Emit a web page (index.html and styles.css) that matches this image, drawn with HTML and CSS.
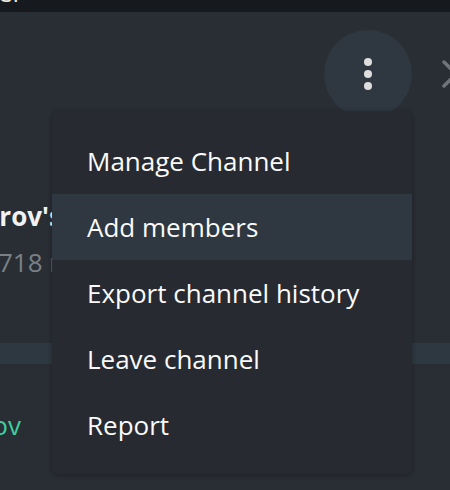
FILE: index.html
```html
<!DOCTYPE html>
<html>
<head>
<meta charset="utf-8">
<link rel="stylesheet" href="styles.css">
</head>
<body>
<div class="topbar"><span class="topbar-text">er</span></div>
<div class="panel">
  <div class="header">
    <button class="more-btn" aria-label="More">
      <span class="dot"></span><span class="dot"></span><span class="dot"></span>
    </button>
    <svg class="close" width="28" height="28" viewBox="0 0 28 28">
      <path d="M2 2 L26 26 M26 2 L2 26" stroke="#6f7479" stroke-width="3.5" stroke-linecap="round" fill="none"/>
    </svg>
  </div>
  <div class="info">
    <div class="title">Durov's Channel</div>
    <div class="count">718 members</div>
  </div>
  <div class="band"></div>
  <div class="link-wrap"><span class="link">@durov</span></div>

  <ul class="menu">
    <li class="menu-item">Manage Channel</li>
    <li class="menu-item is-hover">Add members</li>
    <li class="menu-item">Export channel history</li>
    <li class="menu-item">Leave channel</li>
    <li class="menu-item">Report</li>
  </ul>
</div>
</body>
</html>
```

FILE: styles.css
```css
* { box-sizing: border-box; }
html, body {
  margin: 0;
  padding: 0;
}
body {
  width: 450px;
  height: 490px;
  overflow: hidden;
  background: #292d34;
  font-family: "Open Sans", "Noto Sans", sans-serif;
  font-size: 26px;
  line-height: 36px;
  color: #ffffff;
}
.topbar {
  height: 12px;
  background: #16191d;
  overflow: hidden;
}
.topbar-text {
  display: block;
  margin-top: -26px;
  margin-left: -2px;
  color: #e8e8e8;
}
.panel {
  position: relative;
  height: 478px;
  overflow: hidden;
}
.header {
  display: flex;
  align-items: center;
  gap: 30px;
  padding: 18px 0 0 324px;
  width: 520px;
}
.more-btn {
  width: 88px;
  height: 88px;
  flex: none;
  border: 0;
  padding: 0;
  border-radius: 50%;
  background: #2f3840;
  display: flex;
  flex-direction: column;
  align-items: center;
  justify-content: center;
  gap: 4px;
}
.dot {
  width: 8px;
  height: 8px;
  border-radius: 50%;
  background: #dedede;
}
.close { flex: none; }
.info {
  margin-top: 80px;
  white-space: nowrap;
}
.title {
  font-weight: 700;
  margin-left: -37px;
  color: #f2f2f2;
}
.count {
  margin-top: 10px;
  margin-left: -2px;
  color: #7c8084;
}
.band {
  margin-top: 63px;
  height: 21px;
  background: #2e3840;
}
.link-wrap {
  margin-top: 43px;
  width: 21px;
  overflow: hidden;
  display: flex;
  justify-content: flex-end;
  white-space: nowrap;
}
.link {
  flex: none;
  color: #3ecf9e;
}
.menu {
  position: absolute;
  top: 99px;
  left: 52px;
  width: 360px;
  margin: 0;
  padding: 17px 0 16px;
  list-style: none;
  background: #272b31;
  border-radius: 6px;
  box-shadow: 0 1px 5px rgba(0, 0, 0, 0.3);
}
.menu-item {
  height: 66px;
  padding: 15px 0 15px 35px;
  color: #fafafa;
  white-space: nowrap;
}
.menu-item.is-hover {
  background: #2f3840;
}
```
